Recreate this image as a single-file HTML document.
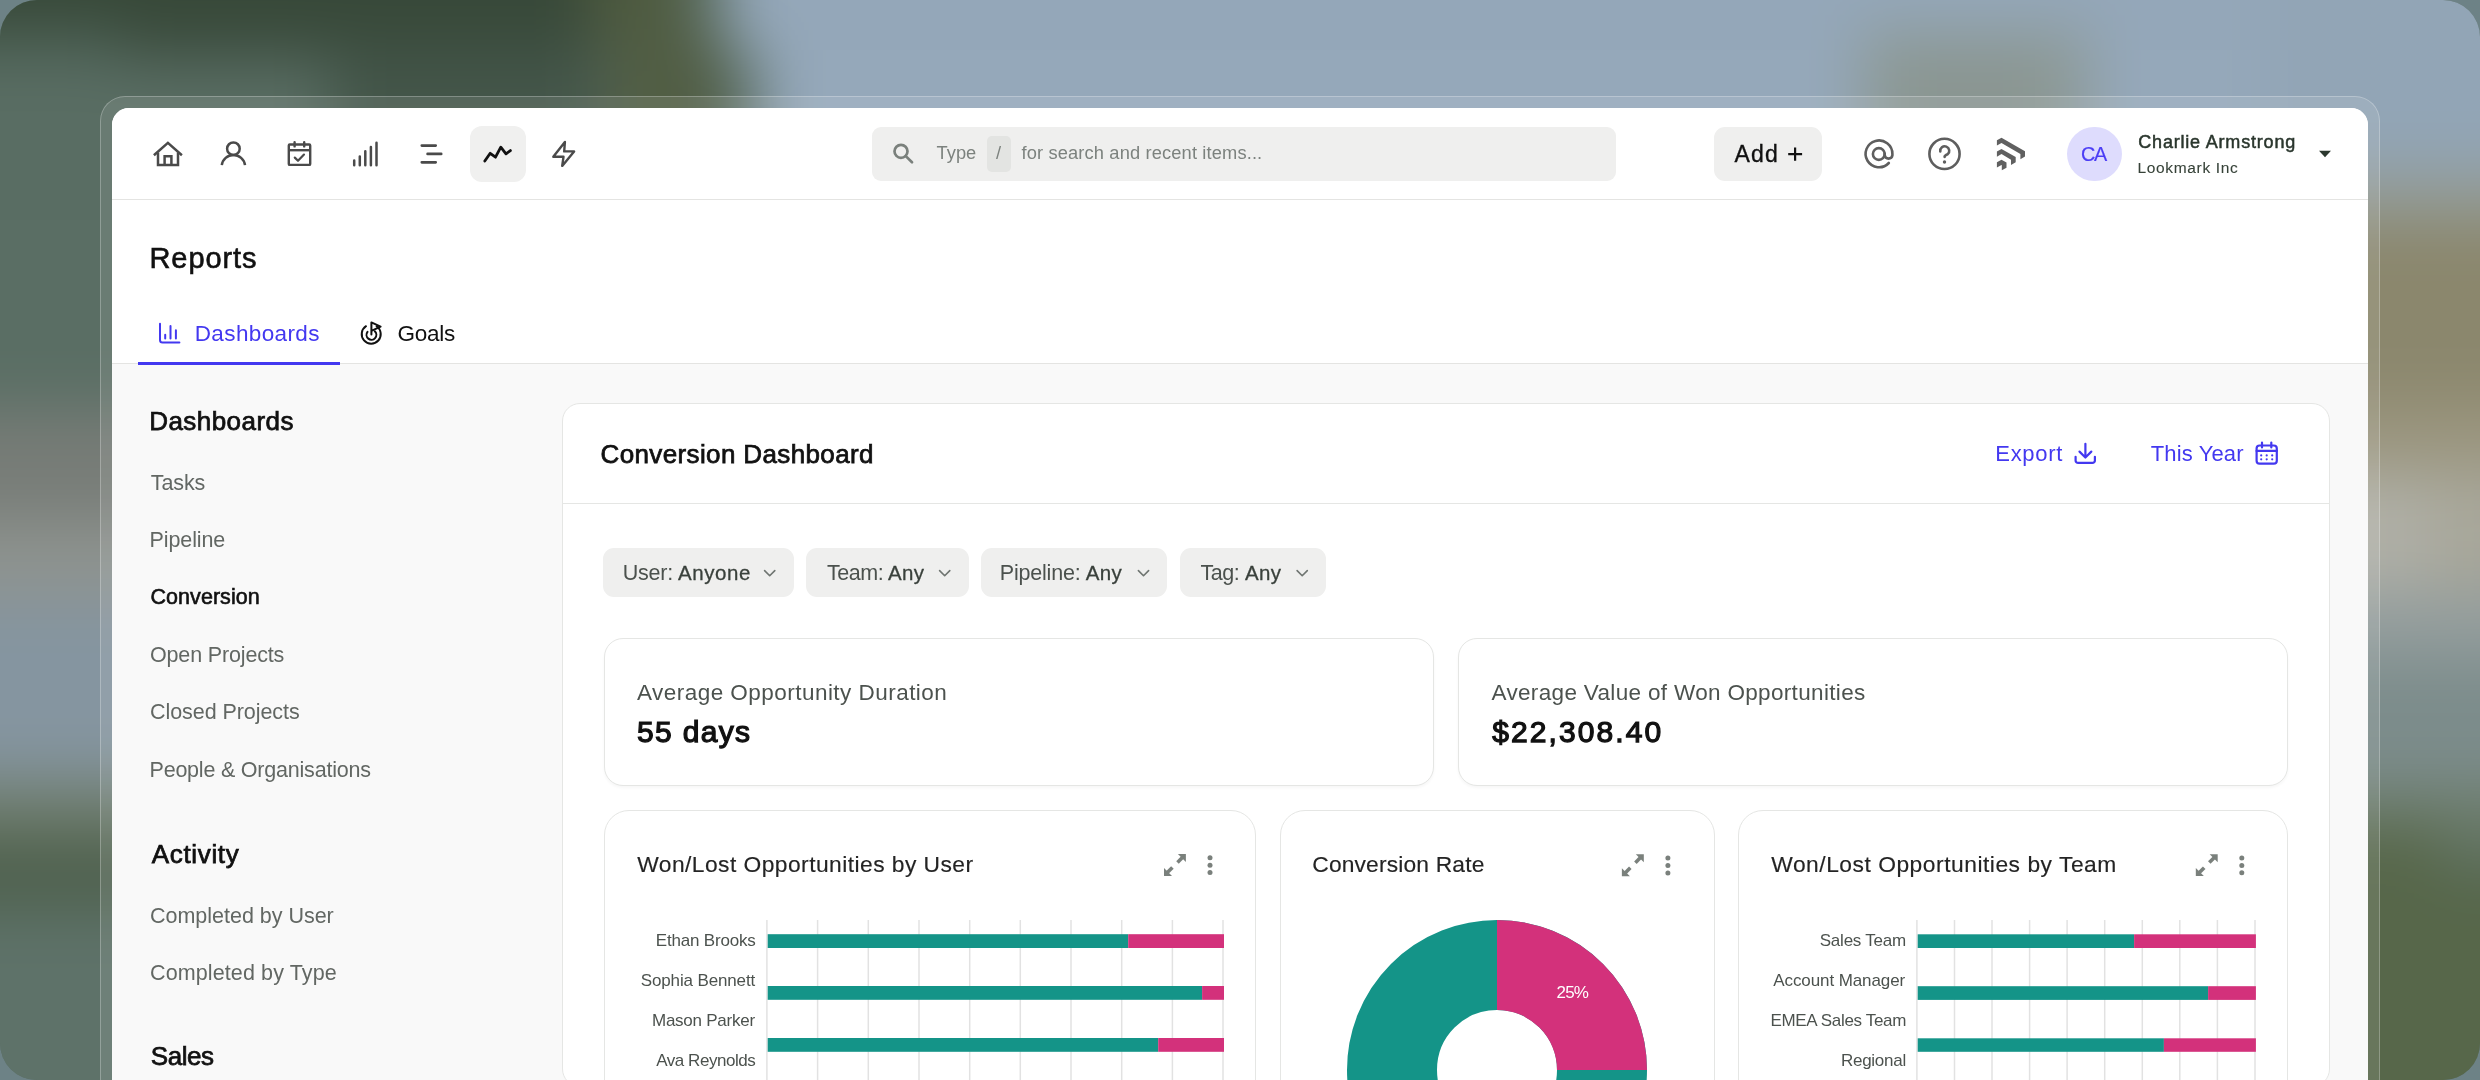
<!DOCTYPE html>
<html><head><meta charset="utf-8"><title>Reports</title>
<style>
html,body{margin:0;padding:0}
body{width:2480px;height:1080px;overflow:hidden;position:relative;background:#6d8286;font-family:"Liberation Sans",sans-serif;}
#bg{position:absolute;left:0;top:0;width:2480px;height:1080px;border-radius:37px;overflow:hidden;background:#5c7066;}
#bg .blur{position:absolute;left:0;top:0;width:2480px;height:1080px;filter:blur(30px);}
#bg .blur div{position:absolute;}
#frame{position:absolute;left:100px;top:96px;width:2280px;height:1010px;border-radius:25px 25px 0 0;background:rgba(255,255,255,.10);box-shadow:inset 0 0 0 1px rgba(255,255,255,.26);}
#clip{position:absolute;left:0;top:0;width:2480px;height:1080px;border-radius:37px;overflow:hidden;}
#win{position:absolute;left:112px;top:108px;width:2256px;height:990px;border-radius:17px 17px 0 0;background:#f9f9f9;overflow:hidden;}
#nav{position:absolute;left:0;top:0;width:2256px;height:91px;background:#fff;border-bottom:1.2px solid #e4e4e2;}
#hdr{position:absolute;left:0;top:92px;width:2256px;height:163.2px;background:#fff;border-bottom:1.8px solid #e4e4e2;}
.abs{position:absolute;}
.t{position:absolute;white-space:pre;}
.chip{position:absolute;top:548px;height:49px;border-radius:11px;background:#efefee;}
.card{position:absolute;background:#fff;border:1.5px solid #e5e6e4;box-sizing:border-box;}
#svg{position:absolute;left:0;top:0;}

#texts{position:absolute;left:0;top:0;width:2480px;height:1080px;will-change:transform;}

</style></head>
<body>
<div id="bg"><div class="blur">
<div style="left:-200px;top:-200px;width:2880px;height:1480px;background:#5b6f65"></div>
<div style="left:-200px;top:30px;width:420px;height:140px;background:#52665b"></div>
<div style="left:-200px;top:170px;width:420px;height:230px;background:#5a6e64"></div>
<div style="left:-200px;top:410px;width:420px;height:110px;background:#777c77"></div>
<div style="left:-200px;top:520px;width:420px;height:80px;background:#8e938f"></div>
<div style="left:-200px;top:600px;width:420px;height:180px;background:#8595a0"></div>
<div style="left:-200px;top:780px;width:420px;height:55px;background:#6f7d6e"></div>
<div style="left:-200px;top:835px;width:420px;height:75px;background:#4f614e"></div>
<div style="left:-200px;top:915px;width:420px;height:365px;background:#5e7269"></div>
<div style="left:-200px;top:-200px;width:800px;height:225px;background:#374838"></div>
<div style="left:120px;top:25px;width:480px;height:35px;background:#3c4d3f"></div>
<div style="left:330px;top:60px;width:270px;height:160px;background:#44564a"></div>
<div style="left:-200px;top:60px;width:530px;height:160px;background:#596d63"></div>
<div style="left:-200px;top:25px;width:320px;height:35px;background:#4b5f53"></div>
<div style="left:590px;top:-200px;width:100px;height:240px;background:#4f5b40"></div>
<div style="left:610px;top:40px;width:110px;height:180px;background:#515d43"></div>
<div style="left:725px;top:-200px;width:1955px;height:250px;background:#94a7b9"></div>
<div style="left:760px;top:50px;width:1920px;height:170px;background:#95a8ba"></div>
<div style="left:1860px;top:30px;width:230px;height:190px;background:#8d9a97"></div>
<div style="left:1900px;top:60px;width:140px;height:160px;background:#8a9591"></div>
<div style="left:2260px;top:-200px;width:420px;height:370px;background:#92a5b6"></div>
<div style="left:2260px;top:170px;width:420px;height:55px;background:#939b96"></div>
<div style="left:2260px;top:220px;width:420px;height:180px;background:#8b876d"></div>
<div style="left:2260px;top:400px;width:420px;height:70px;background:#9a957e"></div>
<div style="left:2260px;top:470px;width:420px;height:120px;background:#a8a79a"></div>
<div style="left:2260px;top:480px;width:170px;height:110px;background:#afafa6"></div>
<div style="left:2260px;top:590px;width:420px;height:70px;background:#939d9d"></div>
<div style="left:2260px;top:660px;width:420px;height:130px;background:#7c8c8b"></div>
<div style="left:2260px;top:790px;width:420px;height:60px;background:#6a7a68"></div>
<div style="left:2260px;top:830px;width:180px;height:450px;background:#57674a"></div>
<div style="left:2430px;top:870px;width:250px;height:410px;background:#57674a"></div>
</div></div>
<div id="clip">
<div id="frame"></div>
<div id="win">
  <div id="nav"></div>
  <div id="hdr"></div>
</div>
<!-- nav elements (page coords) -->
<div class="abs" style="left:470px;top:126px;width:56px;height:56px;border-radius:12px;background:#f0f0ef"></div>
<div class="abs" style="left:872px;top:127px;width:744px;height:54px;border-radius:9px;background:#efefee"></div>
<div class="abs" style="left:986.5px;top:136px;width:24.5px;height:36px;border-radius:5px;background:#e3e4e2"></div>
<div class="abs" style="left:1714px;top:127px;width:108px;height:54px;border-radius:11px;background:#efefee"></div>
<div class="abs" style="left:2067px;top:126.8px;width:54.6px;height:54.6px;border-radius:50%;background:#dedcfd"></div>
<!-- tab underline -->
<div class="abs" style="left:138px;top:361.7px;width:202px;height:3.3px;background:#4338f0"></div>
<!-- main card -->
<div class="card" style="left:561.5px;top:403px;width:1768px;height:684px;border-radius:18px;"></div>
<div class="abs" style="left:563px;top:502.7px;width:1766px;height:1.6px;background:#e5e6e4"></div>
<!-- chips -->
<div class="chip" style="left:603.3px;width:190.4px"></div>
<div class="chip" style="left:806px;width:162.8px"></div>
<div class="chip" style="left:981px;width:186.3px"></div>
<div class="chip" style="left:1179.5px;width:146.8px"></div>
<!-- stat cards -->
<div class="card" style="left:604px;top:637.5px;width:829.5px;height:148px;border-radius:19px;box-shadow:0 2px 3px rgba(0,0,0,.035)"></div>
<div class="card" style="left:1458.3px;top:637.5px;width:829.5px;height:148px;border-radius:19px;box-shadow:0 2px 3px rgba(0,0,0,.035)"></div>
<!-- chart cards -->
<div class="card" style="left:604px;top:810px;width:652px;height:300px;border-radius:25px;"></div>
<div class="card" style="left:1280px;top:810px;width:434.5px;height:300px;border-radius:25px;"></div>
<div class="card" style="left:1738px;top:810px;width:550px;height:300px;border-radius:25px;"></div>
<svg id="svg" width="2480" height="1080" viewBox="0 0 2480 1080" fill="none">
<!-- ===== NAV ICONS ===== -->
<g stroke="#4a4a4a" stroke-width="2.5" stroke-linecap="butt" stroke-linejoin="miter">
  <!-- home -->
  <path d="M153.9 155.2 L167.9 142.9 L181.9 155.2" />
  <path d="M158 152.5 V165 H178 V152.5" />
  <path d="M164.6 165 V156.3 H171.4 V165" />
</g>
<g stroke="#4a4a4a" stroke-width="2.5" stroke-linecap="round">
  <!-- user -->
  <circle cx="233.4" cy="148.7" r="6.3"/>
  <path d="M221.8 165.2 A11.7 11.7 0 0 1 245 165.2" stroke-linecap="butt"/>
</g>
<g stroke="#4a4a4a" stroke-width="2.4" stroke-linejoin="round" stroke-linecap="round">
  <!-- calendar check -->
  <rect x="288.8" y="144.5" width="21.4" height="20.4" rx="1"/>
  <path d="M288.8 150.2 H310.2" stroke-linecap="butt"/>
  <path d="M294.6 142.2 V146.4 M304.2 142.2 V146.4"/>
  <path d="M294.8 157.6 L298 160.8 L304 154.6" stroke-width="2.2"/>
</g>
<g stroke="#4a4a4a" stroke-width="2.5" stroke-linecap="round">
  <!-- signal bars -->
  <path d="M354.2 160.6 V165.2 M359.8 156.6 V165.2 M365.3 151.2 V165.2 M370.9 147 V165.2 M376.5 142.8 V165.2"/>
  <!-- lines -->
  <path d="M421.8 145.6 H435.7 M427.6 153.9 H441.2 M421.8 162.3 H435.7" stroke-width="2.7"/>
</g>
<!-- activity (active) -->
<path d="M484.8 161 L490.2 153.3 L495.5 157.2 L500.8 147.2 L506 153.8 L510.4 150.6" stroke="#111" stroke-width="2.8" stroke-linecap="round" stroke-linejoin="round"/>
<!-- bolt -->
<path d="M564.9 142 L553.3 156.8 H563.5 L562.2 165.9 L574.1 151.4 H564.2 Z" stroke="#4a4a4a" stroke-width="2.4" stroke-linejoin="round"/>
<path id="plus" d="M1788.2 154.1 H1802.1 M1795.1 147.4 V160.8" stroke="#111" stroke-width="2.2"/>
<!-- search -->
<g stroke="#7a807c" stroke-width="2.7">
  <circle cx="901" cy="151.3" r="6.5"/>
  <path d="M905.8 156.1 L912 162.3" stroke-linecap="round"/>
</g>
<!-- @ -->
<g stroke="#5e5e5e" stroke-width="2.6" stroke-linecap="round">
  <circle cx="1878.8" cy="154" r="5.9"/>
  <path d="M1884.7 153.5 V155.3 A3.9 3.9 0 0 0 1892.4 155.3 V154 A13.4 13.4 0 1 0 1888.8 163"/>
</g>
<!-- ? -->
<g stroke="#5e5e5e" stroke-width="2.6" stroke-linecap="round">
  <circle cx="1944.5" cy="153.9" r="15.1"/>
  <path d="M1940.3 151.5 A4.5 4.5 0 1 1 1947.6 154.3 Q1944.7 155.4 1944.6 156.9" stroke-linejoin="round"/>
</g>
<circle cx="1944.5" cy="162" r="1.7" fill="#5e5e5e"/>
<!-- logo -->
<g fill="#606060">
  <path d="M1996.9 140.3 L2001.5 137.7 L2025 151.2 V156.6 L2020.4 159.3 V153.9 L2001.5 142.9 L1996.9 145.6 Z"/>
  <path d="M1996.9 151.5 L2001.5 148.9 L2015.7 157 V162.3 L2011 164.9 V159.7 L2001.5 154 L1996.9 156.7 Z"/>
  <path d="M1996.9 162.3 L2001.5 159.7 L2006.5 162.6 V167.7 L2001.8 170.3 V165.2 L2001.5 165 L1996.9 167.6 Z"/>
</g>
<!-- caret -->
<path d="M2319 150.8 H2331 L2325 157.3 Z" fill="#2c382f"/>
<!-- ===== TABS ICONS ===== -->
<g stroke="#4338f0" stroke-width="2" stroke-linecap="round" stroke-linejoin="round">
  <path d="M160 323.8 V340 A2.5 2.5 0 0 0 162.5 342.5 H179.4"/>
  <path d="M165.2 334.8 V338.4 M170.5 326 V338.4 M175.9 330.2 V338.4"/>
</g>
<g stroke="#111" stroke-width="2" stroke-linecap="round" stroke-linejoin="round">
  <path d="M376.6 326.3 A9.5 9.5 0 1 1 366 326.2"/>
  <path d="M374.8 331.3 A4.9 4.9 0 1 1 367.5 331.9"/>
  <path d="M371.4 334.6 V322.4 L380.6 326.6 L371.4 330.8"/>
</g>
<!-- ===== MAIN HEADER ICONS ===== -->
<g stroke="#4338f0" stroke-width="2.2" stroke-linecap="round" stroke-linejoin="round">
  <path d="M2085.4 443.8 V457.2 M2079.5 451.6 L2085.4 457.5 L2091.3 451.6"/>
  <path d="M2075.6 456.8 V460.4 A2.5 2.5 0 0 0 2078.1 462.9 H2092.4 A2.5 2.5 0 0 0 2094.9 460.4 V456.8"/>
  <rect x="2256.6" y="445.5" width="20.2" height="18.2" rx="3"/>
  <path d="M2256.6 450.9 H2276.8 M2262 442.6 V447.4 M2271.3 442.6 V447.4" />
</g>
<g fill="#4338f0">
  <circle cx="2261.2" cy="455.4" r="1.1"/><circle cx="2266.7" cy="455.4" r="1.1"/><circle cx="2272.2" cy="455.4" r="1.1"/>
  <circle cx="2261.2" cy="459.3" r="1.1"/><circle cx="2266.7" cy="459.3" r="1.1"/><circle cx="2272.2" cy="459.3" r="1.1"/>
</g>
<!-- chip chevrons -->
<g stroke="#6f7571" stroke-width="1.6" stroke-linecap="round" stroke-linejoin="round">
  <path d="M764.6 570.6 L769.7 575.7 L774.8 570.6"/>
  <path d="M939.6 570.6 L944.7 575.7 L949.8 570.6"/>
  <path d="M1138.4 570.6 L1143.5 575.7 L1148.6 570.6"/>
  <path d="M1297.1 570.6 L1302.2 575.7 L1307.3 570.6"/>
</g>
<!-- ===== CHART 1 ===== -->
<g stroke="#e2e2e2" stroke-width="1.5">
  <path d="M766.9 920 V1080 M817.6 920 V1080 M868.3 920 V1080 M919 920 V1080 M969.7 920 V1080 M1020.3 920 V1080 M1071 920 V1080 M1121.7 920 V1080 M1172.4 920 V1080 M1223 920 V1080"/>
</g>
<g>
  <rect x="767.7" y="934.2" width="360.5" height="13.8" fill="#149488"/><rect x="1128.2" y="934.2" width="95.8" height="13.8" fill="#d3317b"/>
  <rect x="767.7" y="986" width="434.4" height="13.8" fill="#149488"/><rect x="1202.1" y="986" width="21.9" height="13.8" fill="#d3317b"/>
  <rect x="767.7" y="1038" width="390.5" height="13.8" fill="#149488"/><rect x="1158.2" y="1038" width="65.8" height="13.8" fill="#d3317b"/>
</g>
<!-- ===== CHART 3 ===== -->
<g stroke="#e2e2e2" stroke-width="1.5">
  <path d="M1916.9 920 V1080 M1954.5 920 V1080 M1992 920 V1080 M2029.6 920 V1080 M2067.1 920 V1080 M2104.7 920 V1080 M2142.3 920 V1080 M2179.8 920 V1080 M2217.4 920 V1080 M2255 920 V1080"/>
</g>
<g>
  <rect x="1917.7" y="934.3" width="216.4" height="13.7" fill="#149488"/><rect x="2134.1" y="934.3" width="121.8" height="13.7" fill="#d3317b"/>
  <rect x="1917.7" y="986.2" width="290.4" height="13.7" fill="#149488"/><rect x="2208.1" y="986.2" width="47.8" height="13.7" fill="#d3317b"/>
  <rect x="1917.7" y="1038.3" width="246.2" height="13.5" fill="#149488"/><rect x="2163.9" y="1038.3" width="92" height="13.5" fill="#d3317b"/>
</g>
<!-- ===== DONUT ===== -->
<circle cx="1497" cy="1070" r="105" stroke="#149488" stroke-width="90"/>
<path d="M1497 920 A150 150 0 0 1 1647 1070 H1557 A60 60 0 0 0 1497 1010 Z" fill="#d3317b"/>
<!-- expand + kebab icons -->
<g id="exp" fill="#7a807c">
  <path d="M1177.9 854 H1185.9 V862 Z"/>
  <path d="M1182.6 857.3 L1177.5 862.4" stroke="#7a807c" stroke-width="3.6"/>
  <path d="M1164 867.9 V875.9 H1172 Z"/>
  <path d="M1167.3 872.6 L1172.4 867.5" stroke="#7a807c" stroke-width="3.6"/>
  <circle cx="1210" cy="857.8" r="2.5"/><circle cx="1210" cy="865.2" r="2.5"/><circle cx="1210" cy="872.6" r="2.5"/>
</g>
<use href="#exp" x="457.9" y="0.3"/>
<use href="#exp" x="1031.8" y="0.2"/>

</svg>
</div>

<div id="texts">
<span class="t" style="left:936.50px;top:143.50px;font-size:18.3px;line-height:18.3px;color:#7c827e;letter-spacing:0.045px;">Type</span>
<span class="t" style="left:996.00px;top:143.50px;font-size:18.3px;line-height:18.3px;color:#7c827e;letter-spacing:0.000px;">/</span>
<span class="t" style="left:1021.50px;top:143.50px;font-size:18.3px;line-height:18.3px;color:#7c827e;letter-spacing:0.136px;">for search and recent items...</span>
<span class="t" style="left:1734.50px;top:142.50px;font-size:23px;line-height:23px;color:#111;letter-spacing:1.144px;-webkit-text-stroke:0.35px #111;">Add</span>
<span class="t" style="left:2081.00px;top:144.75px;font-size:19.8px;line-height:19.8px;color:#4b3df5;letter-spacing:-1.403px;-webkit-text-stroke:0.2px #4b3df5;">CA</span>
<span class="t" style="left:2138.25px;top:133.00px;font-size:18px;line-height:18px;color:#2a362d;letter-spacing:0.809px;-webkit-text-stroke:0.5px #2a362d;">Charlie Armstrong</span>
<span class="t" style="left:2137.50px;top:159.50px;font-size:15.5px;line-height:15.5px;color:#364238;letter-spacing:0.663px;-webkit-text-stroke:0.1px #364238;">Lookmark Inc</span>
<span class="t" style="left:149.50px;top:243.50px;font-size:29px;line-height:29px;color:#111;letter-spacing:0.906px;-webkit-text-stroke:0.6px #111;">Reports</span>
<span class="t" style="left:194.75px;top:322.75px;font-size:22.5px;line-height:22.5px;color:#4338f0;letter-spacing:0.375px;">Dashboards</span>
<span class="t" style="left:397.50px;top:322.75px;font-size:22.5px;line-height:22.5px;color:#111;letter-spacing:-0.279px;">Goals</span>
<span class="t" style="left:149.25px;top:407.75px;font-size:26px;line-height:26px;color:#111;letter-spacing:0.439px;-webkit-text-stroke:0.75px #111;">Dashboards</span>
<span class="t" style="left:150.75px;top:472.75px;font-size:21.5px;line-height:21.5px;color:#626763;letter-spacing:-0.102px;">Tasks</span>
<span class="t" style="left:149.50px;top:530.00px;font-size:21.5px;line-height:21.5px;color:#626763;letter-spacing:-0.098px;">Pipeline</span>
<span class="t" style="left:150.50px;top:587.25px;font-size:21.5px;line-height:21.5px;color:#111;letter-spacing:0.051px;-webkit-text-stroke:0.6px #111;">Conversion</span>
<span class="t" style="left:150.00px;top:644.75px;font-size:21.5px;line-height:21.5px;color:#626763;letter-spacing:-0.155px;">Open Projects</span>
<span class="t" style="left:150.00px;top:702.00px;font-size:21.5px;line-height:21.5px;color:#626763;letter-spacing:-0.061px;">Closed Projects</span>
<span class="t" style="left:149.50px;top:759.50px;font-size:21.5px;line-height:21.5px;color:#626763;letter-spacing:-0.210px;">People &amp; Organisations</span>
<span class="t" style="left:151.75px;top:840.50px;font-size:26px;line-height:26px;color:#111;letter-spacing:0.663px;-webkit-text-stroke:0.75px #111;">Activity</span>
<span class="t" style="left:150.00px;top:905.75px;font-size:21.5px;line-height:21.5px;color:#626763;letter-spacing:-0.017px;">Completed by User</span>
<span class="t" style="left:150.00px;top:962.75px;font-size:21.5px;line-height:21.5px;color:#626763;letter-spacing:0.115px;">Completed by Type</span>
<span class="t" style="left:150.75px;top:1043.25px;font-size:26px;line-height:26px;color:#111;letter-spacing:-0.433px;-webkit-text-stroke:0.75px #111;">Sales</span>
<span class="t" style="left:600.50px;top:441.25px;font-size:26px;line-height:26px;color:#111;letter-spacing:0.374px;-webkit-text-stroke:0.75px #111;">Conversion Dashboard</span>
<span class="t" style="left:1995.25px;top:442.75px;font-size:22px;line-height:22px;color:#4338f0;letter-spacing:0.709px;">Export</span>
<span class="t" style="left:2150.75px;top:442.75px;font-size:22px;line-height:22px;color:#4338f0;letter-spacing:0.137px;">This Year</span>
<span class="t" style="left:622.75px;top:562.75px;font-size:21.5px;line-height:21.5px;color:#4b514d;letter-spacing:-0.216px;">User:</span>
<span class="t" style="left:678.00px;top:562.75px;font-size:20.5px;line-height:20.5px;color:#39403b;letter-spacing:0.565px;-webkit-text-stroke:0.3px #39403b;">Anyone</span>
<span class="t" style="left:827.00px;top:562.75px;font-size:21.5px;line-height:21.5px;color:#4b514d;letter-spacing:-0.482px;">Team:</span>
<span class="t" style="left:888.00px;top:562.75px;font-size:20.5px;line-height:20.5px;color:#39403b;letter-spacing:0.394px;-webkit-text-stroke:0.3px #39403b;">Any</span>
<span class="t" style="left:999.75px;top:562.75px;font-size:21.5px;line-height:21.5px;color:#4b514d;letter-spacing:-0.189px;">Pipeline:</span>
<span class="t" style="left:1085.75px;top:562.75px;font-size:20.5px;line-height:20.5px;color:#39403b;letter-spacing:0.394px;-webkit-text-stroke:0.3px #39403b;">Any</span>
<span class="t" style="left:1200.50px;top:562.75px;font-size:21.5px;line-height:21.5px;color:#4b514d;letter-spacing:-0.445px;">Tag:</span>
<span class="t" style="left:1245.00px;top:562.75px;font-size:20.5px;line-height:20.5px;color:#39403b;letter-spacing:0.394px;-webkit-text-stroke:0.3px #39403b;">Any</span>
<span class="t" style="left:637.00px;top:682.25px;font-size:22.5px;line-height:22.5px;color:#4c524e;letter-spacing:0.465px;">Average Opportunity Duration</span>
<span class="t" style="left:637.00px;top:716.50px;font-size:30px;line-height:30px;color:#111;letter-spacing:1.315px;-webkit-text-stroke:1.25px #111;">55 days</span>
<span class="t" style="left:1491.50px;top:682.25px;font-size:22.5px;line-height:22.5px;color:#4c524e;letter-spacing:0.334px;">Average Value of Won Opportunities</span>
<span class="t" style="left:1492.25px;top:716.50px;font-size:30px;line-height:30px;color:#111;letter-spacing:2.081px;-webkit-text-stroke:1.25px #111;">$22,308.40</span>
<span class="t" style="left:637.25px;top:852.75px;font-size:22.8px;line-height:22.8px;color:#242424;letter-spacing:0.452px;-webkit-text-stroke:0.15px #242424;">Won/Lost Opportunities by User</span>
<span class="t" style="left:1312.25px;top:852.75px;font-size:22.8px;line-height:22.8px;color:#242424;letter-spacing:0.163px;-webkit-text-stroke:0.15px #242424;">Conversion Rate</span>
<span class="t" style="left:1771.25px;top:852.75px;font-size:22.8px;line-height:22.8px;color:#242424;letter-spacing:0.522px;-webkit-text-stroke:0.15px #242424;">Won/Lost Opportunities by Team</span>
<span class="t" style="left:655.75px;top:932.00px;font-size:17px;line-height:17px;color:#4c524e;letter-spacing:-0.185px;">Ethan Brooks</span>
<span class="t" style="left:640.75px;top:972.25px;font-size:17px;line-height:17px;color:#4c524e;letter-spacing:-0.137px;">Sophia Bennett</span>
<span class="t" style="left:652.00px;top:1012.00px;font-size:17px;line-height:17px;color:#4c524e;letter-spacing:-0.247px;">Mason Parker</span>
<span class="t" style="left:656.25px;top:1051.75px;font-size:17px;line-height:17px;color:#4c524e;letter-spacing:-0.468px;">Ava Reynolds</span>
<span class="t" style="left:1819.75px;top:931.75px;font-size:17px;line-height:17px;color:#4c524e;letter-spacing:-0.230px;">Sales Team</span>
<span class="t" style="left:1773.25px;top:972.25px;font-size:17px;line-height:17px;color:#4c524e;letter-spacing:-0.092px;">Account Manager</span>
<span class="t" style="left:1770.50px;top:1012.00px;font-size:17px;line-height:17px;color:#4c524e;letter-spacing:-0.328px;">EMEA Sales Team</span>
<span class="t" style="left:1841.00px;top:1052.00px;font-size:17px;line-height:17px;color:#4c524e;letter-spacing:-0.272px;">Regional</span>
<span class="t" style="left:1556.50px;top:984.00px;font-size:17px;line-height:17px;color:#fff;letter-spacing:-0.788px;">25%</span>
</div>
</body></html>
